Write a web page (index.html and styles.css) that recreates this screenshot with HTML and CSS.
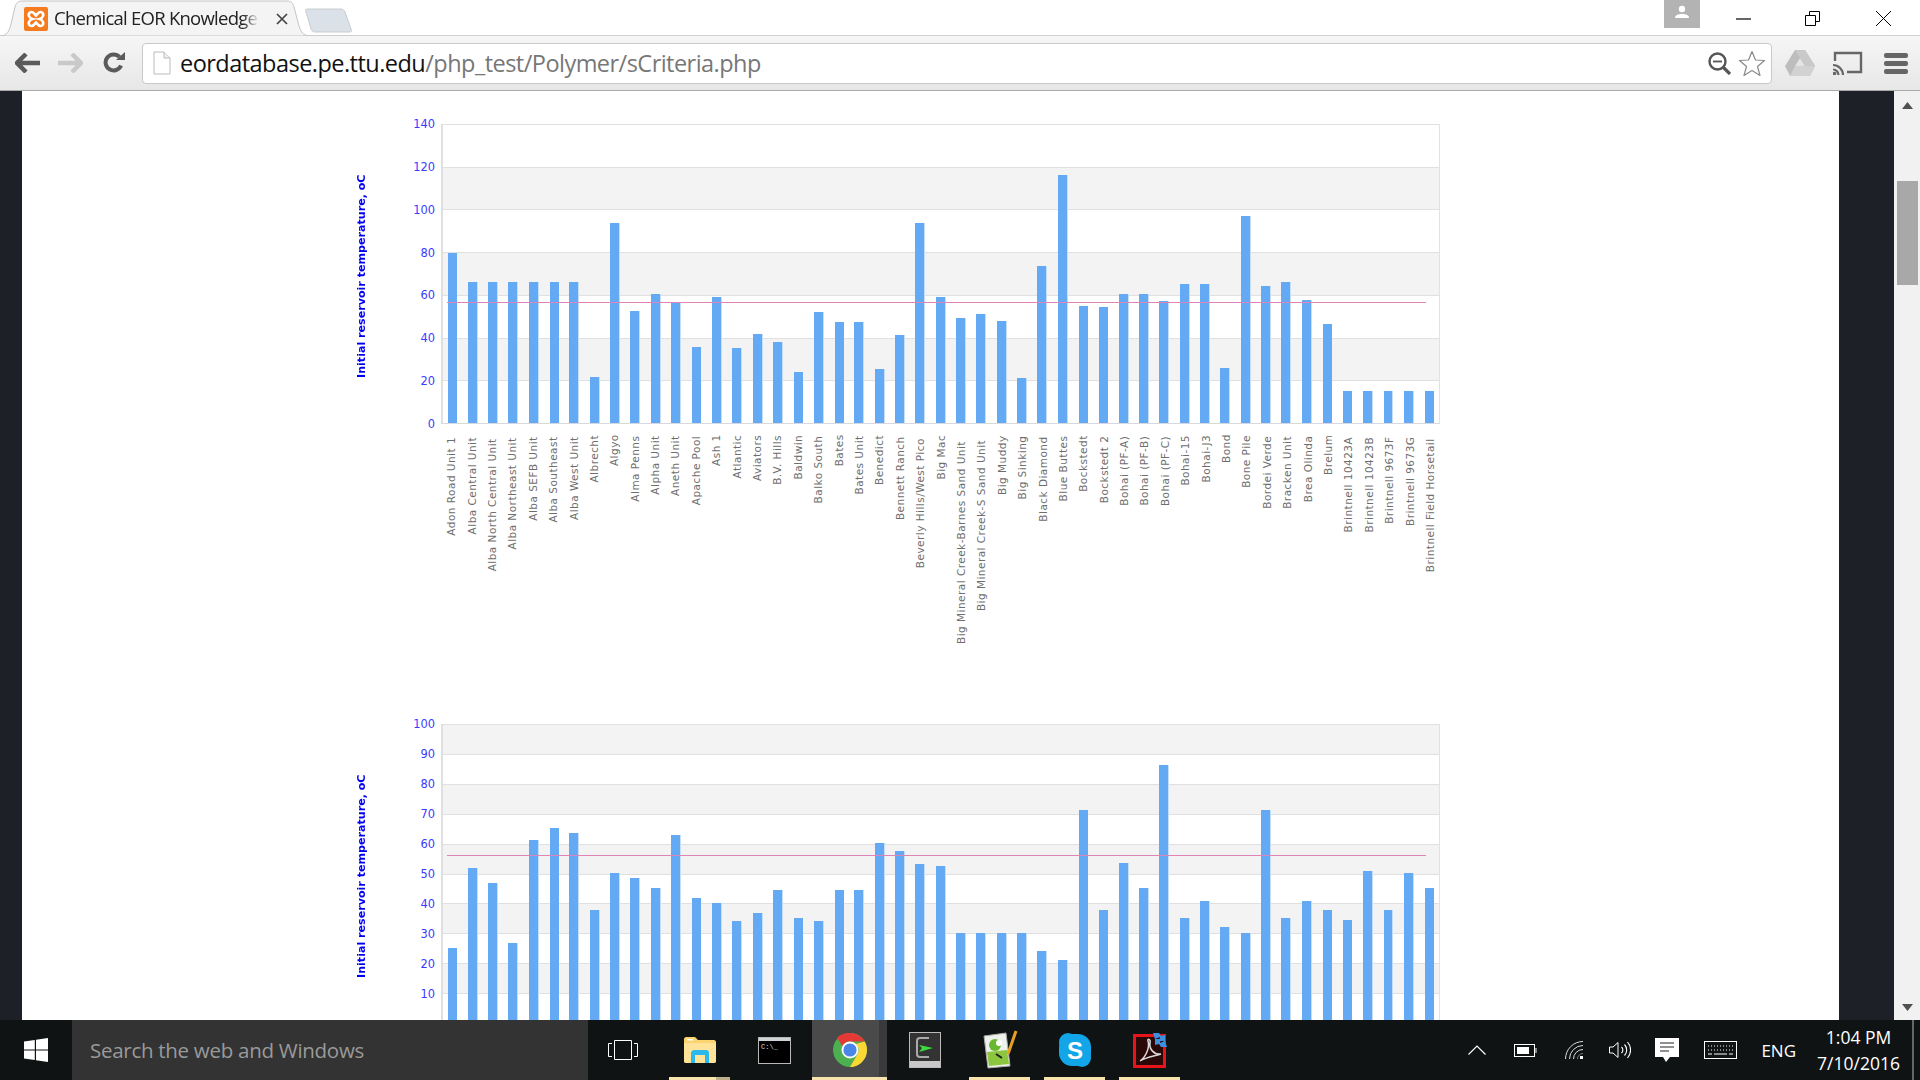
FILE: index.html
```html
<!DOCTYPE html>
<html lang="en">
<head>
<meta charset="utf-8">
<title>Chemical EOR Knowledge</title>
<link rel="stylesheet" href="styles.css">
</head>
<body>
<header class="browser">
  <div class="tabstrip">
    <div class="tab">
      <svg class="tab-shape" width="310" height="36" viewBox="0 0 310 36"><path d="M0 36C6 35 8 32 10 24L14 7C15 3 17 1 21 1H286C290 1 292 3 293 7L298 26C300 32 302 35 308 36Z" fill="#f4f4f4" stroke="#c4c4c4"/></svg>
      <svg class="favicon" width="24" height="24" viewBox="0 0 24 24"><rect width="24" height="24" rx="2" fill="#f47b20"/><path d="M6 5.500C9 3.500 10.500 7 12 8.500C13.500 7 15 3.500 18 5.500C20.500 7.500 19 11 15.500 12C19 13 20.500 16.500 18 18.500C15 20.500 13.500 17 12 15.500C10.500 17 9 20.500 6 18.500C3.500 16.500 5 13 8.500 12C5 11 3.500 7.500 6 5.500Z" fill="none" stroke="#fff" stroke-width="2.600"/></svg>
      <span class="tab-title">Chemical EOR Knowledge</span>
      <svg class="tab-close" width="12" height="12" viewBox="0 0 12 12"><path d="M1 1L11 11M11 1L1 11" stroke="#444" stroke-width="1.700"/></svg>
    </div>
    <svg class="newtab" width="48" height="27" viewBox="0 0 48 27"><path d="M2 2H36C38 2 39 3 40 5L46 22C47 25 46 25 44 25H10C8 25 7 24 6 22L1 5C0 3 1 2 2 2Z" fill="#dbe1e8" stroke="#c8ccd0"/></svg>
    <div class="window-controls">
      <div class="avatar"><svg width="16" height="14" viewBox="0 0 16 14"><circle cx="8" cy="4" r="3.200" fill="#fff"/><path d="M1 13C1 10 4 9 8 9S15 10 15 13Z" fill="#fff"/></svg></div>
      <svg class="win-min" width="15" height="2" viewBox="0 0 15 2"><path d="M0 1H15" stroke="#000" stroke-width="1.200"/></svg>
      <svg class="win-max" width="15" height="15" viewBox="0 0 15 15"><path d="M.5 4.500H10.500V14.500H.5ZM4.500 4.500V.5H14.500V10.500H10.500" fill="none" stroke="#000"/></svg>
      <svg class="win-close" width="15" height="15" viewBox="0 0 15 15"><path d="M0 0L15 15M15 0L0 15" stroke="#000"/></svg>
    </div>
  </div>
  <div class="toolbar">
    <svg class="nav-back" width="26" height="20" viewBox="0 0 26 20"><path d="M11 1L2 10L11 19M3 10H25" fill="none" stroke="#5a5a5a" stroke-width="4.500"/></svg>
    <svg class="nav-forward" width="26" height="20" viewBox="0 0 26 20"><path d="M15 1L24 10L15 19M1 10H23" fill="none" stroke="#c9c9c9" stroke-width="4.500"/></svg>
    <svg class="nav-reload" width="22" height="22" viewBox="0 0 22 22"><path d="M18 13.500A8 8 0 1 1 16.500 5" fill="none" stroke="#5a5a5a" stroke-width="4"/><path d="M13 8H22V0Z" fill="#5a5a5a"/></svg>
    <div class="omnibox">
      <svg class="page-icon" width="18" height="24" viewBox="0 0 18 24"><path d="M1 1H11L17 7V23H1Z" fill="#fff" stroke="#bbb"/><path d="M11 1V7H17" fill="#eee" stroke="#bbb"/></svg>
      <span class="url"><span class="url-host">eordatabase.pe.ttu.edu</span>/php_test/Polymer/sCriteria.php</span>
      <svg class="zoom-icon" width="23" height="23" viewBox="0 0 23 23"><circle cx="9.500" cy="9.500" r="8" fill="none" stroke="#555" stroke-width="2.400"/><path d="M5 9.500H14" stroke="#555" stroke-width="1.800"/><path d="M15 15L22 22" stroke="#555" stroke-width="3.200"/></svg>
      <svg class="star-icon" width="28" height="27" viewBox="0 0 28 27"><path d="M14 1.500L17.500 10L26.500 10.500L19.500 16.500L22 25.500L14 20.500L6 25.500L8.500 16.500L1.500 10.500L10.500 10Z" fill="#fff" stroke="#8a8a8a" stroke-width="1.200" stroke-linejoin="round"/></svg>
    </div>
    <svg class="drive-icon" width="30" height="26" viewBox="0 0 30 26"><path d="M10 0H20L30 16L25 26H5L0 16Z" fill="#bdbdbd"/><path d="M15 8L20 16H10Z" fill="#e4e4e4"/><path d="M20 0L30 16H20L10 0Z" fill="#c9c9c9"/><path d="M5 26L10 16H30L25 26Z" fill="#d2d2d2"/></svg>
    <svg class="cast-icon" width="30" height="24" viewBox="0 0 30 24"><path d="M2 10V2H28V21H14" fill="none" stroke="#666" stroke-width="2.400"/><path d="M0 14A10 10 0 0 1 10 24M0 18.500A5.500 5.500 0 0 1 5.500 24" fill="none" stroke="#666" stroke-width="2.200"/><circle cx="1.500" cy="22.500" r="1.800" fill="#666"/></svg>
    <div class="menu-icon"><i></i><i></i><i></i></div>
  </div>
</header>

<div class="viewport">
  <div class="side-dark side-left"></div>
  <main class="page">

    <section class="chart">
      <div class="y-title">Initial reservoir temperature, oC</div>
      <div class="y-axis"><span>140</span><span>120</span><span>100</span><span>80</span><span>60</span><span>40</span><span>20</span><span>0</span></div>
      <div class="plot-col">
        <div class="plot">
          <div class="bands"><div></div><div class="alt"></div><div></div><div class="alt"></div><div></div><div class="alt"></div><div></div></div>
          <div class="bars">
            <i style="height:56.8%"></i><i style="height:47.1%"></i><i style="height:47.1%"></i><i style="height:47.1%"></i><i style="height:47.1%"></i><i style="height:47.1%"></i><i style="height:47.1%"></i>
            <i style="height:15.4%"></i><i style="height:66.8%"></i><i style="height:37.4%"></i><i style="height:43.1%"></i><i style="height:40.4%"></i><i style="height:25.4%"></i><i style="height:42.1%"></i>
            <i style="height:25.1%"></i><i style="height:29.8%"></i><i style="height:27.1%"></i><i style="height:17.1%"></i><i style="height:37.1%"></i><i style="height:33.8%"></i><i style="height:33.8%"></i>
            <i style="height:18.1%"></i><i style="height:29.4%"></i><i style="height:66.8%"></i><i style="height:42.1%"></i><i style="height:35.1%"></i><i style="height:36.4%"></i><i style="height:34.1%"></i>
            <i style="height:15.1%"></i><i style="height:52.4%"></i><i style="height:82.8%"></i><i style="height:39.1%"></i><i style="height:38.8%"></i><i style="height:43.1%"></i><i style="height:43.1%"></i>
            <i style="height:40.8%"></i><i style="height:46.4%"></i><i style="height:46.4%"></i><i style="height:18.4%"></i><i style="height:69.4%"></i><i style="height:45.8%"></i><i style="height:47.1%"></i>
            <i style="height:41.1%"></i><i style="height:33.1%"></i><i style="height:10.8%"></i><i style="height:10.8%"></i><i style="height:10.8%"></i><i style="height:10.8%"></i><i style="height:10.8%"></i>
          </div>
          <div class="threshold threshold-a"></div>
        </div>
        <div class="x-axis">
          <div><span>Adon Road Unit 1</span></div><div><span>Alba Central Unit</span></div><div><span>Alba North Central Unit</span></div><div><span>Alba Northeast Unit</span></div><div><span>Alba SEFB Unit</span></div><div><span>Alba Southeast</span></div><div><span>Alba West Unit</span></div>
          <div><span>Albrecht</span></div><div><span>Algyo</span></div><div><span>Alma Penns</span></div><div><span>Alpha Unit</span></div><div><span>Aneth Unit</span></div><div><span>Apache Pool</span></div><div><span>Ash 1</span></div>
          <div><span>Atlantic</span></div><div><span>Aviators</span></div><div><span>B.V. Hills</span></div><div><span>Baldwin</span></div><div><span>Balko South</span></div><div><span>Bates</span></div><div><span>Bates Unit</span></div>
          <div><span>Benedict</span></div><div><span>Bennett Ranch</span></div><div><span>Beverly Hills/West Pico</span></div><div><span>Big Mac</span></div><div><span>Big Mineral Creek-Barnes Sand Unit</span></div><div><span>Big Mineral Creek-S Sand Unit</span></div><div><span>Big Muddy</span></div>
          <div><span>Big Sinking</span></div><div><span>Black Diamond</span></div><div><span>Blue Buttes</span></div><div><span>Bockstedt</span></div><div><span>Bockstedt 2</span></div><div><span>Bohai (PF-A)</span></div><div><span>Bohai (PF-B)</span></div>
          <div><span>Bohai (PF-C)</span></div><div><span>Bohai-15</span></div><div><span>Bohai-J3</span></div><div><span>Bond</span></div><div><span>Bone Pile</span></div><div><span>Bordei Verde</span></div><div><span>Bracken Unit</span></div>
          <div><span>Brea Olinda</span></div><div><span>Brelum</span></div><div><span>Brintnell 10423A</span></div><div><span>Brintnell 10423B</span></div><div><span>Brintnell 9673F</span></div><div><span>Brintnell 9673G</span></div><div><span>Brintnell Field Horsetail</span></div>
        </div>
      </div>
    </section>

    <section class="chart">
      <div class="y-title">Initial reservoir temperature, oC</div>
      <div class="y-axis"><span>100</span><span>90</span><span>80</span><span>70</span><span>60</span><span>50</span><span>40</span><span>30</span><span>20</span><span>10</span><span></span></div>
      <div class="plot-col">
        <div class="plot">
          <div class="bands"><div class="alt"></div><div></div><div class="alt"></div><div></div><div class="alt"></div><div></div><div class="alt"></div><div></div><div class="alt"></div><div></div></div>
          <div class="bars">
            <i style="height:25.2%"></i><i style="height:51.9%"></i><i style="height:46.9%"></i><i style="height:26.9%"></i><i style="height:61.2%"></i><i style="height:65.2%"></i><i style="height:63.6%"></i>
            <i style="height:37.9%"></i><i style="height:50.2%"></i><i style="height:48.6%"></i><i style="height:45.2%"></i><i style="height:62.9%"></i><i style="height:41.9%"></i><i style="height:40.2%"></i>
            <i style="height:34.2%"></i><i style="height:36.9%"></i><i style="height:44.6%"></i><i style="height:35.2%"></i><i style="height:34.2%"></i><i style="height:44.6%"></i><i style="height:44.6%"></i>
            <i style="height:60.2%"></i><i style="height:57.6%"></i><i style="height:53.2%"></i><i style="height:52.6%"></i><i style="height:30.2%"></i><i style="height:30.2%"></i><i style="height:30.2%"></i>
            <i style="height:30.2%"></i><i style="height:24.2%"></i><i style="height:21.2%"></i><i style="height:71.2%"></i><i style="height:37.9%"></i><i style="height:53.6%"></i><i style="height:45.2%"></i>
            <i style="height:86.2%"></i><i style="height:35.2%"></i><i style="height:40.9%"></i><i style="height:32.2%"></i><i style="height:30.2%"></i><i style="height:71.2%"></i><i style="height:35.2%"></i>
            <i style="height:40.9%"></i><i style="height:37.9%"></i><i style="height:34.6%"></i><i style="height:50.9%"></i><i style="height:37.9%"></i><i style="height:50.2%"></i><i style="height:45.2%"></i>
          </div>
          <div class="threshold threshold-b"></div>
        </div>
      </div>
    </section>

  </main>
  <div class="side-dark side-right"></div>
  <div class="scrollbar">
    <svg class="scroll-up" width="11" height="7" viewBox="0 0 11 7"><path d="M5.500 0L11 7H0Z" fill="#505050"/></svg>
    <div class="scroll-thumb"></div>
    <svg class="scroll-down" width="11" height="7" viewBox="0 0 11 7"><path d="M5.500 7L11 0H0Z" fill="#505050"/></svg>
  </div>
</div>

<footer class="taskbar">
  <div class="start"><svg width="24" height="24" viewBox="0 0 24 24"><path d="M0 3.500L10.800 2V11.400H0ZM12 1.800L24 0V11.400H12ZM0 12.600H10.800V22L0 20.500ZM12 12.600H24V24L12 22.200Z" fill="#fff"/></svg></div>
  <div class="search">Search the web and Windows</div>
  <div class="task-view"><svg width="30" height="20" viewBox="0 0 30 20"><path d="M6.500.5H23.500V19.500H6.500ZM4 3.500H.5V16.500H4M26 3.500H29.500V16.500H26" fill="none" stroke="#fff"/></svg></div>
  <div class="task-app running partial"><svg width="32" height="26" viewBox="0 0 32 26"><path d="M0 2C0 1 1 0 2 0H11L14 3H30C31 3 32 4 32 5V24C32 25 31 26 30 26H2C1 26 0 25 0 24Z" fill="#fbd36f"/><path d="M0 6H32V24C32 25 31 26 30 26H2C1 26 0 25 0 24Z" fill="#fee398"/><path d="M7 26V16C7 14 9 13 10 13H22C24 13 25 14 25 16V26H21V18H11V26Z" fill="#2bb8ec"/><rect x="3" y="2" width="6" height="1.500" fill="#fff"/></svg></div>
  <div class="task-app"><svg width="33" height="27" viewBox="0 0 33 27"><rect x=".5" y=".5" width="32" height="26" fill="#000" stroke="#b9b9b9"/><rect x="1" y="1" width="31" height="3" fill="#cfd3d6"/><text class="cmd-text" x="3" y="12">C:\_</text></svg></div>
  <div class="task-app running active">
    <svg width="34" height="34" viewBox="0 0 34 34"><circle cx="17" cy="17" r="17" fill="#4caf50"/><path d="M17 0A17 17 0 0 1 31.700 8.500H17A8.500 8.500 0 0 0 9.300 13L4 4.800A17 17 0 0 1 17 0Z" fill="#e53935"/><path d="M31.700 8.500A17 17 0 0 1 17 34L25 20.500A8.500 8.500 0 0 0 23 11Z" fill="#fdd835"/><circle cx="17" cy="17" r="8.500" fill="#fff"/><circle cx="17" cy="17" r="6.600" fill="#4a86e8"/></svg>
  </div>
  <div class="task-app"><svg width="32" height="36" viewBox="0 0 32 36"><rect x=".5" y=".5" width="31" height="35" fill="#333" stroke="#bbb"/><rect x="1" y="29" width="30" height="6" fill="#c8c8c8"/><path d="M20 6H11C9 6 8 7 8 9V22C8 24 9 25 11 25H20" fill="none" stroke="#aaa" stroke-width="2"/><path d="M10 13L24 16L10 20L13 16Z" fill="#3ddc3d"/></svg></div>
  <div class="task-app running"><svg width="36" height="40" viewBox="0 0 36 40"><path d="M2 6L24 3L28 36L6 38Z" fill="#eef2ea" stroke="#aaa"/><path d="M5 22L25 20L27 34L7 36Z" fill="#8cc63f"/><circle cx="13" cy="15" r="6" fill="#6ab82f"/><circle cx="17" cy="13" r="3" fill="#fff"/><path d="M14 24L20 28" stroke="#222" stroke-width="2"/><path d="M34 1L26 24" stroke="#e6a11e" stroke-width="3"/></svg></div>
  <div class="task-app running"><svg width="34" height="36" viewBox="0 0 34 36"><rect x="1" y="2" width="32" height="32" rx="13" fill="#12a5e8"/><circle cx="10" cy="10" r="9" fill="#12a5e8"/><circle cx="24" cy="26" r="9" fill="#12a5e8"/><text class="skype-text" x="17" y="27" text-anchor="middle">S</text></svg></div>
  <div class="task-app running"><svg width="34" height="36" viewBox="0 0 34 36"><rect x="1.500" y="3.500" width="30" height="31" fill="#2a0808" stroke="#e8141c" stroke-width="3"/><path d="M7 29C13 25 17 15 15 9C14 6 18 7 17 11C16 17 21 23 28 22C22 24 13 25 7 29Z" fill="none" stroke="#d8d8d8" stroke-width="1.500"/><path d="M20 1H26L28 4L32 3V9H26L27 5L22 7ZM34 15H28L26 12L22 13V7H28L27 11L32 9Z" fill="#3e8fe0"/></svg></div>
  <div class="tray">
    <svg class="tray-chevron" width="18" height="10" viewBox="0 0 18 10"><path d="M.5 9.500L9 1L17.500 9.500" fill="none" stroke="#fff" stroke-width="1.200"/></svg>
    <svg class="tray-battery" width="23" height="13" viewBox="0 0 23 13"><rect x=".5" y=".5" width="20" height="12" fill="none" stroke="#fff"/><rect x="3" y="3" width="12" height="7" fill="#fff"/><rect x="21" y="4" width="2" height="5" fill="#888"/></svg>
    <svg class="tray-wifi" width="19" height="18" viewBox="0 0 19 18"><path d="M.5 18A17.500 17.500 0 0 1 18 .5M4.500 18A13.500 13.500 0 0 1 18 4.500M8.500 18A9.500 9.500 0 0 1 18 8.500" fill="none" stroke="#ddd"/><path d="M12.500 18A5.500 5.500 0 0 1 18 12.500" fill="none" stroke="#777"/><rect x="15" y="15" width="3" height="3" fill="#fff"/></svg>
    <svg class="tray-sound" width="22" height="18" viewBox="0 0 22 18"><path d="M.5 6H4L9 1.500V16.500L4 12H.5Z" fill="none" stroke="#fff"/><path d="M12.500 6A4 4 0 0 1 12.500 12M15.500 3.500A8 8 0 0 1 15.500 14.500M18.500 1A12 12 0 0 1 18.500 17" fill="none" stroke="#fff" stroke-width="1.100"/></svg>
    <svg class="tray-action" width="24" height="24" viewBox="0 0 24 24"><path d="M0 0H24V19H15L11 24L8 19H0Z" fill="#fff"/><path d="M5 5H19M5 9H19M5 13H14" stroke="#222" stroke-width="1.200"/></svg>
    <svg class="tray-keyboard" width="33" height="18" viewBox="0 0 33 18"><rect x=".5" y=".5" width="32" height="17" fill="none" stroke="#fff"/><path d="M4 5H29M4 9H29" stroke="#fff" stroke-dasharray="1 2"/><path d="M4 13H8M10 13H23M25 13H29" stroke="#fff"/></svg>
    <span class="tray-lang">ENG</span>
    <div class="clock"><span>1:04 PM</span><span>7/10/2016</span></div>
    <div class="show-desktop"></div>
  </div>
</footer>
</body>
</html>
```
FILE: styles.css
```css
* { box-sizing: border-box; }
html, body { margin: 0; height: 100%; }
body {
  width: 1920px;
  height: 1080px;
  overflow: hidden;
  display: flex;
  flex-direction: column;
  background: #fff;
  font-family: "DejaVu Sans", sans-serif;
}

/* browser chrome */
.browser { flex: 0 0 91px; display: flex; flex-direction: column; }
.tabstrip { flex: 0 0 35px; position: relative; display: flex; align-items: flex-start; background: #fff; }
.tab { position: relative; width: 310px; height: 35px; margin-left: 1px; display: flex; align-items: center; }
.tab-shape { position: absolute; left: 0; top: 0; z-index: 2; }
.favicon { position: relative; z-index: 3; margin-left: 23px; margin-top: 2px; }
.tab-title {
  position: relative; z-index: 3;
  margin-left: 6px; width: 205px; flex: none;
  white-space: nowrap; overflow-x: clip; overflow-y: visible;
  font: 18.500px/26px "Open Sans", sans-serif; letter-spacing: -.75px; color: #222;
  -webkit-mask-image: linear-gradient(90deg, #000 92%, transparent 100%);
  mask-image: linear-gradient(90deg, #000 92%, transparent 100%);
}
.tab-close { position: relative; z-index: 3; margin-left: 17px; margin-top: 2px; }
.newtab { margin-top: 7px; margin-left: -6px; }
.window-controls { margin-left: auto; display: flex; align-items: flex-start; position: relative; height: 35px; }
.avatar { width: 36px; height: 28px; background: #b3b3b3; display: flex; justify-content: center; padding-top: 5px; margin-right: 36px; }
.win-min { margin-top: 18px; margin-right: 54px; }
.win-max { margin-top: 11px; margin-right: 56px; }
.win-close { margin-top: 11px; margin-right: 29px; }

.toolbar {
  flex: 0 0 56px; display: flex; align-items: center;
  background: linear-gradient(#f6f6f6, #e7e7e7);
  border-top: 1px solid #cfcfcf;
  border-bottom: 1px solid #a9a9a9;
}
.nav-back { margin-left: 15px; }
.nav-forward { margin-left: 16px; }
.nav-reload { margin-left: 20px; }
.omnibox {
  width: 1630px; height: 41px; margin-left: 17px;
  display: flex; align-items: center;
  background: #fff; border: 1px solid #c9c9c9; border-radius: 4px;
}
.page-icon { margin-left: 10px; flex: none; }
.url { margin-left: 9px; font: 23.500px "Open Sans", sans-serif; letter-spacing: -.53px; color: #777; white-space: nowrap; }
.url-host { color: #111; }
.zoom-icon { margin-left: auto; margin-right: 7px; }
.star-icon { margin-right: 5px; }
.drive-icon { margin-left: 13px; }
.cast-icon { margin-left: 18px; }
.menu-icon { margin-left: 21px; width: 24px; display: flex; flex-direction: column; gap: 3px; }
.menu-icon i { height: 5px; border-radius: 2px; background: #666; }

/* page area */
.viewport { flex: 1 1 0; min-height: 0; display: flex; background: #fff; overflow: hidden; }
.side-dark { background: #1e2028; }
.side-left { flex: 0 0 22px; }
.side-right { flex: 0 0 55px; }
.page { flex: 1 1 0; min-width: 0; overflow: hidden; padding-top: 33px; }
.scrollbar { flex: 0 0 26px; background: #f1f1f1; display: flex; flex-direction: column; align-items: center; }
.scroll-up { margin-top: 11px; }
.scroll-thumb { width: 21px; height: 104px; margin-top: 72px; background: #a8a8a8; }
.scroll-down { margin-top: auto; margin-bottom: 9px; }

/* charts */
.chart { height: 600px; display: flex; align-items: flex-start; padding-left: 332px; }
.y-title {
  flex: 0 0 16px; height: 300px;
  writing-mode: vertical-rl; transform: rotate(180deg);
  text-align: center;
  font: bold 11.100px/16px "DejaVu Sans", sans-serif; color: #0000f0;
  white-space: nowrap; padding-bottom: 4px;
}
.y-axis {
  flex: 0 0 71px; height: 314px; margin-top: -7px; padding-right: 6px;
  display: flex; flex-direction: column; justify-content: space-between; align-items: flex-end;
  font-size: 11.400px; line-height: 14px; color: #3a3aff;
}
.y-axis span { min-height: 14px; }
.plot-col { flex: 0 0 999px; }
.plot { position: relative; height: 300px; border-right: 1px solid #e2e2e2; border-left: 2px solid #e0e0e0; border-bottom: 1px solid #d8d8e0; }
.bands { height: 100%; display: flex; flex-direction: column; }
.bands div { flex: 1 1 0; border-top: 1px solid #e0e0e0; }
.bands .alt { background: #f3f3f3; }
.bars { position: absolute; inset: 0 0 0 -1px; display: flex; align-items: flex-end; }
.bars i { flex: 1 1 0; position: relative; display: block; background: linear-gradient(90deg, transparent 27.500%, #63a9f4 27.500%, #63a9f4 72.500%, #c4dffb 72.500%, #c4dffb 77%, transparent 77%); }
.threshold { position: absolute; left: 4px; right: 13px; height: 1px; background: #e084b8; }
.threshold-a { bottom: 40%; }
.threshold-b { bottom: 56%; }
.x-axis { display: flex; height: 280px; padding-top: 9px; font-size: 10.500px; letter-spacing: .47px; color: #6e6e6e; }
.x-axis div { flex: 1 1 0; min-width: 0; display: flex; justify-content: center; align-items: flex-start; }
.x-axis span { writing-mode: vertical-rl; white-space: nowrap; line-height: 14px; transform: translateY(4%) rotate(180deg); }

/* taskbar */
.taskbar { flex: 0 0 60px; display: flex; align-items: stretch; background: #101313; color: #fff; }
.start { flex: 0 0 72px; display: flex; align-items: center; justify-content: center; }
.search {
  flex: 0 0 516px; background: #333; color: #9a9a9a; display: flex; align-items: center;
  padding-left: 18px; font: 20.500px "Open Sans", sans-serif; letter-spacing: -.28px;
}
.task-view { flex: 0 0 74px; display: flex; align-items: center; justify-content: center; padding-right: 4px; }
.task-app { flex: 0 0 75px; display: flex; align-items: center; justify-content: center; position: relative; }
.task-app.running::after { content: ""; position: absolute; left: 7px; right: 7px; bottom: 0; height: 3px; background: #f7e3ab; }
.task-app.partial::after { background: linear-gradient(90deg, #f7e3ab 77%, #bdb08a 77%); }
.task-app.active { background: linear-gradient(90deg, #4a4a4a 90%, #3a3a3a 90%); }
.task-app.active::after { left: 0; right: 0; }
.cmd-text { font: 7px "Liberation Mono", monospace; fill: #ddd; }
.skype-text { font: bold 24px "Liberation Sans", sans-serif; fill: #fff; }
.tray { margin-left: auto; display: flex; align-items: center; position: relative; }
.tray-battery { margin-left: 28px; }
.tray-wifi { margin-left: 28px; }
.tray-sound { margin-left: 25px; }
.tray-action { margin-left: 24px; }
.tray-keyboard { margin-left: 25px; }
.tray-lang { margin-left: 24px; font: 17px "Open Sans", sans-serif; }
.clock { margin-left: 21px; width: 83px; display: flex; flex-direction: column; align-items: center; gap: 4px; font: 17.500px/22px "Open Sans", sans-serif; }
.show-desktop { width: 2px; height: 60px; margin-left: 12px; margin-right: 6px; background: #666; }
```
